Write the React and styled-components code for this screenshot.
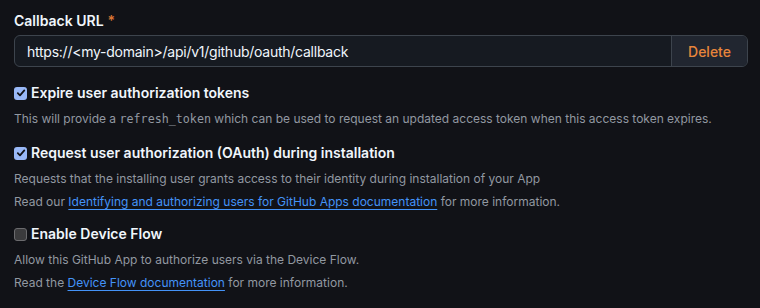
import React from "react";
import styled, { createGlobalStyle } from "styled-components";

const Global = createGlobalStyle`
  html, body { margin: 0; padding: 0; background: #111217; }
  body { font-family: Inter, "Noto Sans", "Liberation Sans", sans-serif; color: #f0f6fc; }
  * { box-sizing: border-box; }
`;

const Page = styled.div`
  width: 760px;
  height: 308px;
  padding: 12px 12px 0 14px;
  background: #111217;
  display: flex;
  flex-direction: column;
`;

const FieldLabel = styled.label`
  font-size: 14px;
  font-weight: 600;
  line-height: 18px;
  display: flex;
  gap: 4px;
  align-items: baseline;
`;

const Required = styled.span`
  color: #db7534;
`;

const InputGroup = styled.div`
  margin-top: 5px;
  height: 32px;
  width: 734px;
  display: flex;
  border: 1px solid #3d444d;
  border-radius: 6px;
  overflow: hidden;
  background: #161a21;
`;

const UrlInput = styled.div`
  flex: 1;
  padding: 0 12px;
  display: flex;
  align-items: center;
  font-size: 14px;
  letter-spacing: -0.25px;
  color: #f0f6fc;
`;

const DeleteButton = styled.button`
  width: 76px;
  border: none;
  border-left: 1px solid #3d444d;
  background: #212630;
  color: #e8853b;
  font-family: inherit;
  font-size: 14px;
  font-weight: 500;
  cursor: pointer;
`;

const Option = styled.div`
  margin-top: ${(p) => p.$top}px;
  display: flex;
  flex-direction: column;
`;

const CheckRow = styled.label`
  display: flex;
  align-items: center;
  gap: 4px;
  font-size: 14px;
  font-weight: 600;
  line-height: 20px;
`;

const Box = styled.span`
  width: 13px;
  height: 13px;
  border-radius: 3px;
  display: inline-flex;
  align-items: center;
  justify-content: center;
  background: ${(p) => (p.$checked ? "#99b8f7" : "#3b3b3d")};
  border: ${(p) => (p.$checked ? "none" : "1px solid #6b6b6e")};
`;

const Note = styled.p`
  margin: ${(p) => p.$top ?? 5}px 0 0 0;
  font-size: 12px;
  line-height: 18px;
  color: #9198a1;
`;

const Code = styled.code`
  font-family: "DejaVu Sans Mono", "Liberation Mono", monospace;
  font-size: 11.7px;
`;

const Link = styled.a`
  color: #4493f8;
  text-decoration: underline;
  text-underline-offset: 3px;
`;

function Checkbox({ checked }) {
  return (
    <Box $checked={checked}>
      {checked && (
        <svg width="10" height="10" viewBox="0 0 10 10">
          <path d="M1.8 5.2 L4 7.3 L8.3 2.4" fill="none" stroke="#111217" strokeWidth="1.8" strokeLinecap="round" strokeLinejoin="round" />
        </svg>
      )}
    </Box>
  );
}

export default function App() {
  return (
    <>
      <Global />
      <Page>
        <FieldLabel>
          Callback URL <Required>*</Required>
        </FieldLabel>
        <InputGroup>
          <UrlInput>https://&lt;my-domain&gt;/api/v1/github/oauth/callback</UrlInput>
          <DeleteButton>Delete</DeleteButton>
        </InputGroup>

        <Option $top={16}>
          <CheckRow>
            <Checkbox checked /> Expire user authorization tokens
          </CheckRow>
          <Note $top={7}>
            This will provide a <Code>refresh_token</Code> which can be used to request an updated access token when this access token expires.
          </Note>
        </Option>

        <Option $top={15}>
          <CheckRow>
            <Checkbox checked /> Request user authorization (OAuth) during installation
          </CheckRow>
          <Note $top={7}>Requests that the installing user grants access to their identity during installation of your App</Note>
          <Note>
            Read our <Link>Identifying and authorizing users for GitHub Apps documentation</Link> for more information.
          </Note>
        </Option>

        <Option $top={13}>
          <CheckRow>
            <Checkbox /> Enable Device Flow
          </CheckRow>
          <Note $top={7}>Allow this GitHub App to authorize users via the Device Flow.</Note>
          <Note>
            Read the <Link>Device Flow documentation</Link> for more information.
          </Note>
        </Option>
      </Page>
    </>
  );
}
